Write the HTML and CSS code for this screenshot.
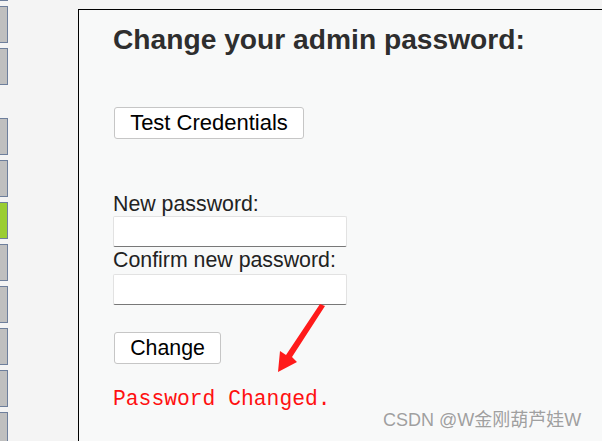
FILE: index.html
```html
<!DOCTYPE html>
<html>
<head>
<meta charset="utf-8">
<link rel="stylesheet" href="styles.css">
</head>
<body>
<div class="page">
  <div class="sidebar">
    <div class="tab stub"></div>
    <div class="tab"></div>
    <div class="tab"></div>
    <div class="tab gap"></div>
    <div class="tab"></div>
    <div class="tab active"></div>
    <div class="tab"></div>
    <div class="tab"></div>
    <div class="tab"></div>
    <div class="tab"></div>
    <div class="tab"></div>
  </div>
  <div class="panel">
    <h2 class="title">Change your admin password:</h2>
    <button class="btn btn-test">Test Credentials</button>
    <form class="form">
      <label class="label">New password:</label>
      <input class="field" type="password">
      <label class="label">Confirm new password:</label>
      <input class="field field2" type="password">
      <button class="btn btn-change" type="button">Change</button>
    </form>
    <div class="status">Password Changed.</div>
  </div>
</div>
<svg class="arrow" width="602" height="441" viewBox="0 0 602 441">
  <polygon points="320,304 325,306 292,357 297,362 278,372 280,351 286,355" fill="#ff1a1a"/>
</svg>
<div class="watermark">CSDN @W金刚葫芦娃W</div>
</body>
</html>
```
FILE: styles.css
```css
html, body {
  margin: 0;
  padding: 0;
  width: 602px;
  height: 441px;
  overflow: hidden;
  background: #f4f4f4;
  font-family: "Liberation Sans", Arial, sans-serif;
}
.page {
  display: flex;
  align-items: flex-start;
  height: 441px;
  overflow: hidden;
}
.sidebar {
  width: 8px;
  height: 441px;
  overflow: hidden;
  display: flex;
  flex-direction: column;
  gap: 5px;
}
.tab {
  width: 7px;
  height: 35px;
  background: #bfbfbf;
  border: 1px solid #6e7f9c;
  border-left: none;
  flex: none;
}
.tab.stub {
  height: 0;
  border-top: none;
}
.tab.gap {
  margin-top: 28px;
}
.tab.active {
  background: #9acd32;
}
.panel {
  margin-left: 70px;
  margin-top: 9px;
  width: 524px;
  height: 432px;
  flex: none;
  background: #f8f9f9;
  border: 1px solid #000;
  border-right: none;
  border-bottom: none;
  box-sizing: border-box;
  padding: 14px 0 0 34px;
}
.title {
  margin: 0;
  font-size: 28.2px;
  line-height: 30px;
  font-weight: bold;
  color: #2e2e2e;
  white-space: nowrap;
}
.btn {
  display: block;
  font-family: "Liberation Sans", Arial, sans-serif;
  font-size: 21.33px;
  color: #000;
  background: #fff;
  border: 1px solid #c6c6c6;
  border-radius: 3px;
  height: 32px;
  padding: 0 10px;
  margin-left: 1px;
  line-height: 28px;
}
.btn-test {
  margin-top: 53px;
  width: 190px;
  font-size: 22px;
}
.form {
  margin: 53px 0 0 0;
  display: flex;
  flex-direction: column;
  align-items: flex-start;
}
.label {
  font-size: 21.33px;
  line-height: 24px;
  color: #222;
}
.field {
  width: 234px;
  height: 31px;
  box-sizing: border-box;
  margin: 0 0 1px 0;
  background: #fff;
  border: 1px solid #e2e2e2;
  border-bottom-color: #787878;
  border-radius: 2px;
}
.field2 {
  margin-top: 2px;
}
.btn-change {
  margin-top: 26px;
  width: 107px;
}
.status {
  margin-top: 23px;
  font-family: "Liberation Mono", "Courier New", monospace;
  font-size: 21.33px;
  line-height: 24px;
  color: #ff1010;
}
.arrow {
  position: absolute;
  left: 0;
  top: 0;
}
.watermark {
  position: absolute;
  left: 383px;
  top: 409px;
  font-family: "Liberation Sans", "Noto Sans CJK SC", sans-serif;
  font-size: 18px;
  line-height: 22px;
  color: #a0a0a0;
  text-shadow: 0 0 2px #fff;
}
```
